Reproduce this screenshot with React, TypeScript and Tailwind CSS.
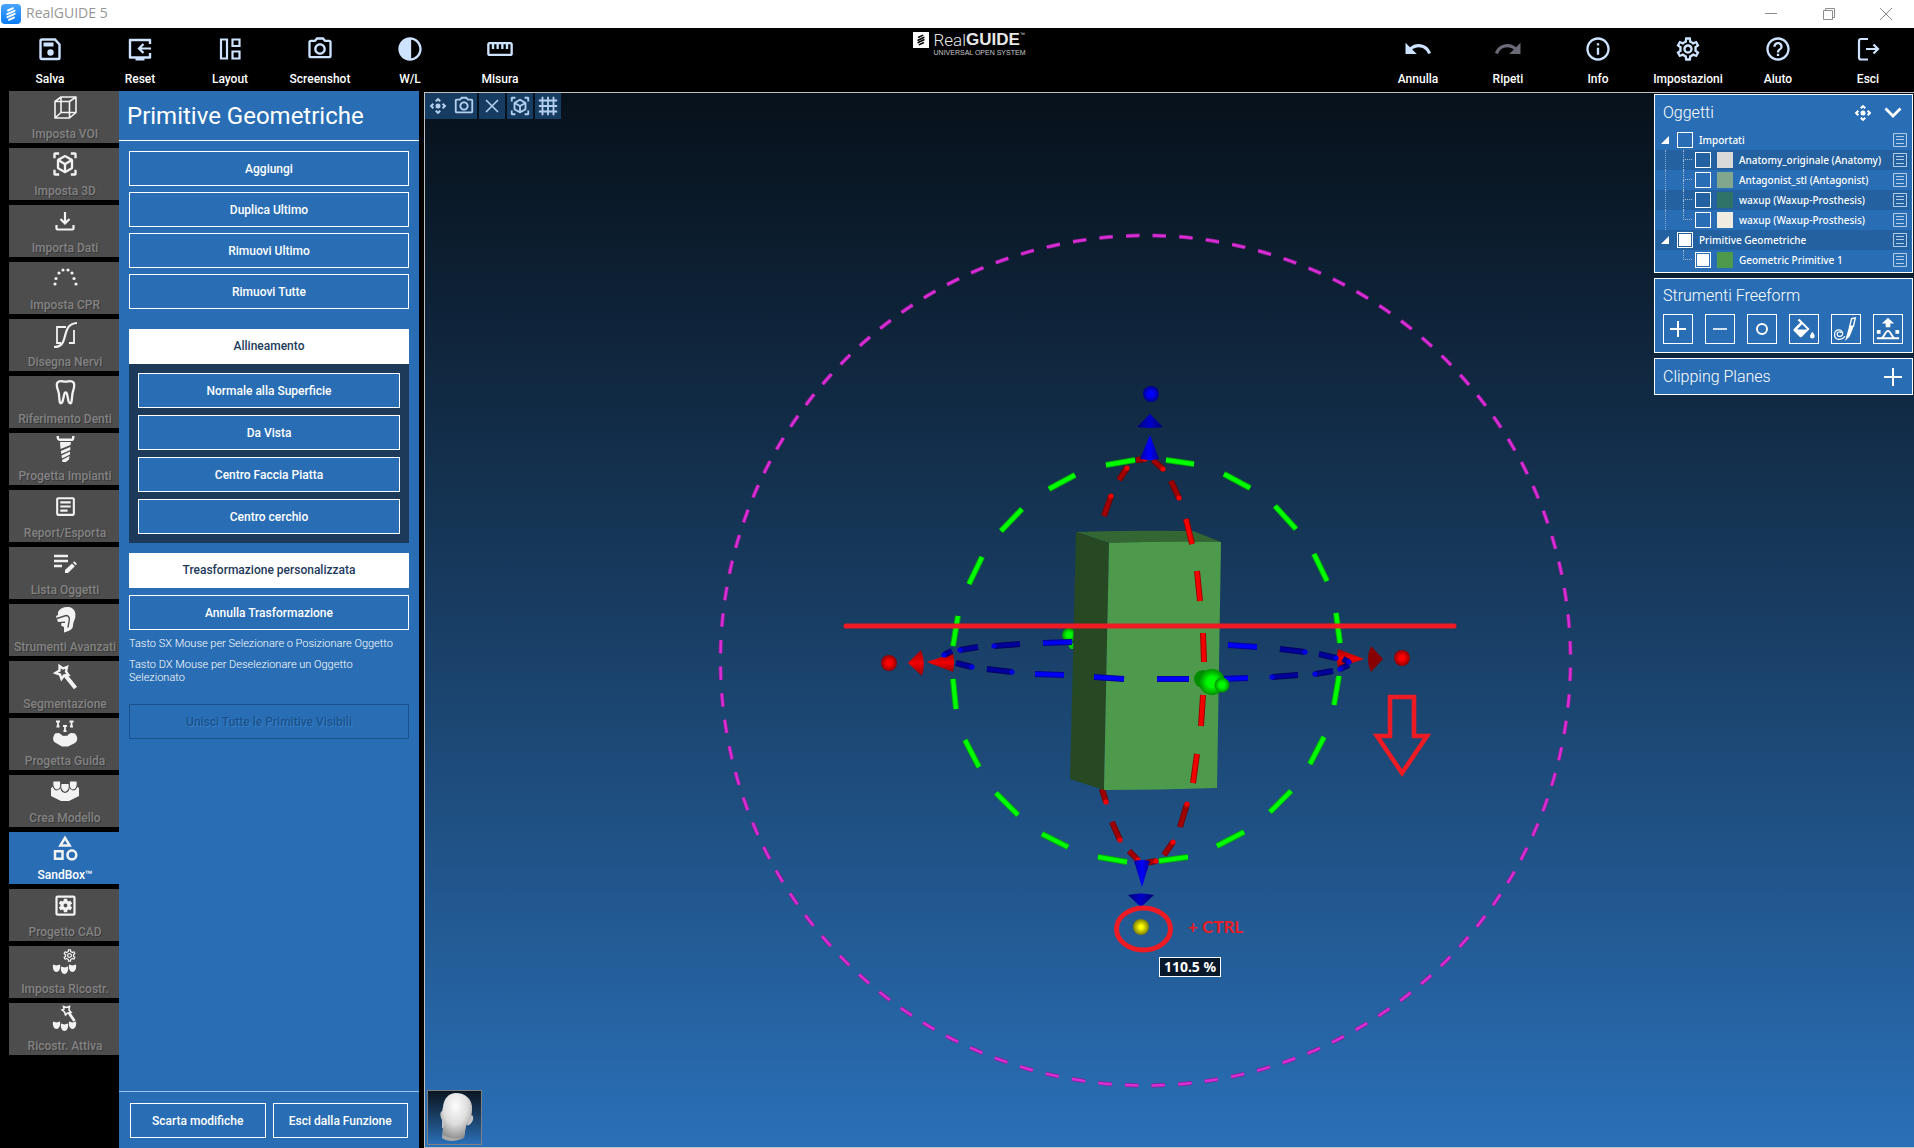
import type { ReactNode } from "react";
import {
  MdControlCamera,
  MdGrid4X4,
  MdHelpOutline,
  MdOutlineArticle,
  MdOutlineCategory,
  MdOutlineContrast,
  MdOutlineInfo,
  MdOutlinePhotoCamera,
  MdOutlineSettings,
  MdOutlineSettingsApplications,
  MdOutlineStraighten,
  MdRedo,
  MdUndo,
  MdViewInAr,
} from "react-icons/md";

export default function App() {
  return (
    <div className="flex h-screen flex-col overflow-hidden bg-black font-['Roboto',sans-serif] text-white">
      <TitleBar />
      <Toolbar />
      <main className="flex min-h-0 flex-1">
        <Sidebar />
        <PrimitivesPanel />
        <Viewport />
      </main>
    </div>
  );
}

function TitleBar() {
  return (
    <header className="flex h-7 shrink-0 items-center bg-white pl-px">
      <AppLogo />
      <h1 className="ml-[5px] flex-1 pb-0.5 font-['Open_Sans',sans-serif] text-[14px] leading-5 text-[#969696]">RealGUIDE 5</h1>
      <div className="flex items-center text-[#8c8c8c]">
        <button aria-label="Riduci" className="flex h-7 w-[58px] items-center justify-center">
          <svg width="14" height="14" viewBox="0 0 14 14" stroke="currentColor"><path d="M1 6.5h12" /></svg>
        </button>
        <button aria-label="Ripristina" className="flex h-7 w-[58px] items-center justify-center">
          <svg width="14" height="14" viewBox="0 0 14 14" fill="none" stroke="currentColor"><path d="M1.5 3.5h9v9h-9zM3.5 3.5v-2h9v9h-2" /></svg>
        </button>
        <button aria-label="Chiudi" className="flex h-7 w-[56px] items-center justify-center">
          <svg width="14" height="14" viewBox="0 0 14 14" stroke="currentColor"><path d="M1 1l12 12M13 1L1 13" /></svg>
        </button>
      </div>
    </header>
  );
}

function AppLogo() {
  return (
    <svg width="20" height="20" viewBox="0 0 20 20">
      <defs>
        <linearGradient id="logo" x1="0" y1="0" x2="0" y2="1">
          <stop offset="0" stopColor="#4aa6ff" />
          <stop offset="1" stopColor="#0a7bf5" />
        </linearGradient>
      </defs>
      <rect width="20" height="20" rx="4" fill="url(#logo)" />
      <HelixMark color="#fff" />
    </svg>
  );
}

function HelixMark({ color }: { color: string }) {
  return (
    <g fill="none" stroke={color} strokeWidth="2" strokeLinecap="round">
      <path d="M7 6.5L12 4.2M6.3 10.2L13.5 6.8M6.5 13.2L13.7 9.8M8 15.8L13 13.5" />
    </g>
  );
}

const LEFT_TOOLS = [
  { label: "Salva", icon: <SaveIcon /> },
  { label: "Reset", icon: <ResetIcon /> },
  { label: "Layout", icon: <LayoutIcon /> },
  { label: "Screenshot", icon: <MdOutlinePhotoCamera size={28} /> },
  { label: "W/L", icon: <MdOutlineContrast size={28} /> },
  { label: "Misura", icon: <MdOutlineStraighten size={28} /> },
];

const RIGHT_TOOLS = [
  { label: "Annulla", icon: <MdUndo size={30} /> },
  { label: "Ripeti", icon: <MdRedo size={30} />, dim: true },
  { label: "Info", icon: <MdOutlineInfo size={28} /> },
  { label: "Impostazioni", icon: <MdOutlineSettings size={28} /> },
  { label: "Aiuto", icon: <MdHelpOutline size={28} /> },
  { label: "Esci", icon: <ExitIcon /> },
];

function Toolbar() {
  return (
    <nav className="flex h-[63px] shrink-0 items-start justify-between bg-black pl-[5px] pr-px">
      <ToolGroup tools={LEFT_TOOLS} />
      <div className="flex gap-[5px] pl-5 pt-1">
        <svg width="16" height="16" viewBox="0 0 20 20">
          <rect width="20" height="20" fill="#fff" />
          <HelixMark color="#000" />
        </svg>
        <div className="font-['Liberation_Sans',sans-serif]">
          <div className="flex text-[17px] leading-4 text-[#e8e8e8]">
            <span className="font-['Roboto'] font-light">Real</span>
            <span className="font-bold">GUIDE</span>
            <span className="text-[5px] leading-[5px]">™</span>
          </div>
          <div className="text-[7px] leading-[9px] text-[#c8c8c8]">UNIVERSAL OPEN SYSTEM</div>
        </div>
      </div>
      <ToolGroup tools={RIGHT_TOOLS} />
    </nav>
  );
}

function ToolGroup({ tools }: { tools: { label: string; icon: ReactNode; dim?: boolean }[] }) {
  return (
    <div className="flex">
      {tools.map((t) => (
        <button key={t.label} className="flex w-[90px] flex-col items-center pt-1.5">
          <span className={`flex h-[30px] items-center ${t.dim ? "text-[#6a6a78]" : "text-[#cde3ff]"}`}>{t.icon}</span>
          <span className="mt-1.5 text-xs font-medium leading-[18px]">{t.label}</span>
        </button>
      ))}
    </div>
  );
}

const STEPS = [
  { label: "Imposta VOI", icon: <WireCubeIcon /> },
  { label: "Imposta 3D", icon: <MdViewInAr size={28} /> },
  { label: "Importa Dati", icon: <ImportIcon /> },
  { label: "Imposta CPR", icon: <ArchDotsIcon /> },
  { label: "Disegna Nervi", icon: <NerveIcon /> },
  { label: "Riferimento Denti", icon: <ToothIcon /> },
  { label: "Progetta Impianti", icon: <ImplantIcon /> },
  { label: "Report/Esporta", icon: <MdOutlineArticle size={25} /> },
  { label: "Lista Oggetti", icon: <ListEditIcon /> },
  { label: "Strumenti Avanzati", icon: <HelmetIcon /> },
  { label: "Segmentazione", icon: <WandIcon /> },
  { label: "Progetta Guida", icon: <GuideIcon /> },
  { label: "Crea Modello", icon: <ModelIcon /> },
  { label: "SandBox™", icon: <MdOutlineCategory size={30} />, active: true },
  { label: "Progetto CAD", icon: <MdOutlineSettingsApplications size={27} /> },
  { label: "Imposta Ricostr.", icon: <RestoreSetupIcon /> },
  { label: "Ricostr. Attiva", icon: <RestoreActiveIcon /> },
];

function Sidebar() {
  return (
    <nav className="flex w-[119px] shrink-0 flex-col gap-[5px] pl-[9px]">
      {STEPS.map((s) => (
        <button
          key={s.label}
          className={`flex h-[52px] shrink-0 flex-col items-center pl-0.5 ${s.active ? "bg-[#296eb4]" : "bg-[#4d4d4d]"}`}
        >
          <span className="flex h-[34px] items-center justify-center pb-0.5 text-[#f2f2f2]">{s.icon}</span>
          <span
            className={`text-xs font-medium leading-[18px] ${s.active ? "text-white" : "text-[#828282] [text-shadow:1px_1px_0_#3a3a3a]"}`}
          >
            {s.label}
          </span>
        </button>
      ))}
    </nav>
  );
}

const OUTLINE_BUTTON = "h-[35px] w-full border border-white text-xs font-medium";

function PrimitivesPanel() {
  return (
    <section className="flex w-[300px] shrink-0 flex-col bg-[#296eb4]">
      <h2 className="h-[50px] border-b border-white pl-2 text-2xl leading-[50px]">Primitive Geometriche</h2>
      <div className="flex-1 px-2.5 pt-2.5">
        <div className="flex flex-col gap-1.5">
          {["Aggiungi", "Duplica Ultimo", "Rimuovi Ultimo", "Rimuovi Tutte"].map((b) => (
            <button key={b} className={OUTLINE_BUTTON}>{b}</button>
          ))}
        </div>

        <div className="mt-5 bg-[#1e3a5a]">
          <h3 className="h-[35px] bg-white text-center text-xs font-medium leading-[35px] text-[#1e3a5a]">Allineamento</h3>
          <div className="flex flex-col gap-[7px] p-[9px]">
            {["Normale alla Superficie", "Da Vista", "Centro Faccia Piatta", "Centro cerchio"].map((b) => (
              <button key={b} className={`${OUTLINE_BUTTON} bg-[#296eb4]`}>{b}</button>
            ))}
          </div>
        </div>

        <h3 className="mt-2.5 h-[35px] bg-white text-center text-xs font-medium leading-[35px] text-[#1e3a5a]">
          Treasformazione personalizzata
        </h3>
        <button className={`mt-[7px] ${OUTLINE_BUTTON}`}>Annulla Trasformazione</button>
        <p className="mt-[7px] text-[11px] font-light leading-[13px]">Tasto SX Mouse per Selezionare o Posizionare Oggetto</p>
        <p className="mt-2 text-[11px] font-light leading-[13px]">
          Tasto DX Mouse per Deselezionare un Oggetto
          <br />
          Selezionato
        </p>
        <button
          disabled
          className="mt-5 h-[35px] w-full border border-[#1b528c] text-xs font-medium text-[#1b528c] [text-shadow:1px_1px_0_#3a80c8]"
        >
          Unisci Tutte le Primitive Visibili
        </button>
      </div>
      <footer className="flex h-[57px] gap-[7px] border-t border-[#9cc4ea] px-[11px] pt-[11px]">
        <button className={OUTLINE_BUTTON}>Scarta modifiche</button>
        <button className={OUTLINE_BUTTON}>Esci dalla Funzione</button>
      </footer>
    </section>
  );
}

function Viewport() {
  return (
    <section className="relative ml-[5px] mt-px min-w-0 flex-1 overflow-hidden border-y border-l border-[#c0c0c0] bg-linear-to-b from-[#07111b] to-[#2a70b8]">
      <Scene />

      {/* View controls */}
      <div className="absolute left-0 top-0 flex gap-0.5 text-[#b4cfee]">
        <div className="flex">
          <ViewButton label="Sposta"><MdControlCamera size={20} /></ViewButton>
          <ViewButton label="Cattura vista"><MdOutlinePhotoCamera size={22} /></ViewButton>
        </div>
        <ViewButton label="Chiudi vista">
          <svg width="14" height="14" viewBox="0 0 14 14" stroke="currentColor" strokeWidth="1.6"><path d="M1 1l12 12M13 1L1 13" /></svg>
        </ViewButton>
        <ViewButton label="Vista 3D"><MdViewInAr size={22} /></ViewButton>
        <ViewButton label="Griglia"><MdGrid4X4 size={22} /></ViewButton>
      </div>

      {/* Docked panels */}
      <div className="absolute right-px top-px flex w-[259px] flex-col gap-[5px]">
        <ObjectsPanel />
        <FreeformPanel />
        <div className="flex h-[37px] items-center justify-between border border-white bg-[#296eb4] pl-2 pr-2.5">
          <h2 className="text-base font-light">Clipping Planes</h2>
          <button aria-label="Espandi Clipping Planes">
            <svg width="18" height="18" viewBox="0 0 18 18" stroke="currentColor" strokeWidth="2"><path d="M9 0v18M0 9h18" /></svg>
          </button>
        </div>
      </div>

      <HeadThumbnail />
    </section>
  );
}

function ViewButton({ label, children }: { label: string; children: ReactNode }) {
  return (
    <button aria-label={label} className="flex size-[26px] items-center justify-center bg-[#173c61]">
      {children}
    </button>
  );
}

const OBJECTS = [
  { name: "Importati", group: true },
  { name: "Anatomy_originale (Anatomy)", color: "#d9d9d9", trunk: true },
  { name: "Antagonist_stl (Antagonist)", color: "#82a78f", trunk: true },
  { name: "waxup (Waxup-Prosthesis)", color: "#2f7368", trunk: true },
  { name: "waxup (Waxup-Prosthesis)", color: "#f1ece1", trunk: true, last: true },
  { name: "Primitive Geometriche", group: true, checked: true },
  { name: "Geometric Primitive 1", color: "#4d9a4c", checked: true, last: true },
];

function ObjectsPanel() {
  return (
    <div className="border border-white bg-[#296eb4] pb-0.5">
      <div className="flex h-[35px] items-center pl-2 pr-2.5">
        <h2 className="flex-1 text-base font-light">Oggetti</h2>
        <button aria-label="Sposta pannello"><MdControlCamera size={20} /></button>
        <button aria-label="Comprimi Oggetti" className="ml-[11px]">
          <svg width="18" height="12" viewBox="0 0 18 12" fill="none" stroke="currentColor" strokeWidth="2.8"><path d="M1.5 1.5L9 9l7.500-7.500" /></svg>
        </button>
      </div>
      <ul className="px-px font-['Noto_Sans',sans-serif] text-[10px] font-medium">
        {OBJECTS.map((o, i) => (
          <li key={i} className={`flex h-5 items-center pr-1 ${i % 2 ? "bg-[#2361a0]" : ""}`}>
            {o.group ? (
              <span className="flex w-[21px] justify-start pl-[5px]">
                <svg width="8" height="8" viewBox="0 0 8 8" fill="#fff"><path d="M8 0v8H0z" /></svg>
              </span>
            ) : (
              <>
                <span className={`ml-[9px] h-5 w-[18px] border-l border-dotted ${o.trunk ? "border-[#86a9cd]" : "border-transparent"}`} />
                <span className="flex h-5 w-3 flex-col">
                  <span className="h-2.5 w-[9px] border-b border-l border-dotted border-[#a3bdd8]" />
                  {!o.last && <span className="h-2.5 border-l border-dotted border-[#a3bdd8]" />}
                </span>
              </>
            )}
            <input
              type="checkbox"
              id={`object-${i}`}
              defaultChecked={o.checked}
              className="size-4 appearance-none border border-white p-px checked:bg-white checked:bg-clip-content"
            />
            {o.color && <span className="ml-1.5 size-4" style={{ backgroundColor: o.color }} />}
            <label htmlFor={`object-${i}`} className="ml-1.5 flex-1 whitespace-nowrap">{o.name}</label>
            <button aria-label={`Menu ${o.name}`} className="text-[#b3cde8]">
              <svg width="14" height="14" viewBox="0 0 14 14" fill="none" stroke="currentColor"><path d="M.5.5h13v13H.5zM3 3.500h8M3 6.500h8M3 10.500h8" /></svg>
            </button>
          </li>
        ))}
      </ul>
    </div>
  );
}

const FREEFORM_TOOLS = [
  { label: "Aggiungi materiale", icon: <svg width="18" height="18" viewBox="0 0 18 18" stroke="currentColor" strokeWidth="2"><path d="M9 1v16M1 9h16" /></svg> },
  { label: "Rimuovi materiale", icon: <svg width="18" height="18" viewBox="0 0 18 18" stroke="currentColor" strokeWidth="1.6"><path d="M2 9h14" /></svg> },
  { label: "Liscia", icon: <svg width="14" height="14" viewBox="0 0 14 14" fill="none" stroke="currentColor" strokeWidth="2"><circle cx="7" cy="7" r="5" /></svg> },
  { label: "Riempi", icon: <FillIcon /> },
  { label: "Disegna", icon: <BrushIcon /> },
  { label: "Deforma", icon: <DeformIcon /> },
];

function FreeformPanel() {
  return (
    <div className="h-[75px] border border-white bg-[#296eb4] px-2 pt-[5px]">
      <h2 className="text-base font-light leading-6">Strumenti Freeform</h2>
      <div className="mt-1.5 flex gap-3">
        {FREEFORM_TOOLS.map((t) => (
          <button key={t.label} aria-label={t.label} className="flex size-[30px] items-center justify-center border border-white">
            {t.icon}
          </button>
        ))}
      </div>
    </div>
  );
}

function HeadThumbnail() {
  return (
    <button
      aria-label="Orientamento testa"
      className="absolute bottom-0.5 left-0.5 border border-[#808080] bg-linear-to-b from-[#0a1622] to-[#2a6fb6]"
    >
      <svg width="53" height="53" viewBox="0 0 53 53">
        <defs>
          <radialGradient id="skull" cx="45%" cy="28%" r="75%">
            <stop offset="0" stopColor="#fdfdfd" />
            <stop offset="0.55" stopColor="#dcdcdc" />
            <stop offset="1" stopColor="#8c8c8c" />
          </radialGradient>
        </defs>
        <path d="M16 20c-5-1-4 5-2 9v8l4 1zM41 25c5-3 5 3 3 6s-4 4-5 3z" fill="#c4c4c4" />
        <path d="M15 36l-1 11c5 4 13 4 22 0l2-14z" fill="#a9a9a9" />
        <path d="M28 2c9 0 17 6 16 17 0 7-3 11-6 16l-2 12c-8 1-15 0-21-3l1-11c-2-5-3-10-1-17C16 7 21 2 28 2z" fill="url(#skull)" />
      </svg>
    </button>
  );
}

/* Rotation handles: [x1, y1, x2, y2] of each dash */

const GREEN_DASHES = [
  [1106, 465, 1135, 460], [1166, 460, 1194, 464], [1224, 474, 1250, 488], [1275, 506, 1296, 529],
  [1314, 554, 1327, 581], [1336, 613, 1340, 643], [1339, 676, 1334, 705], [1324, 737, 1310, 764],
  [1291, 791, 1270, 812], [1244, 832, 1217, 846], [1188, 857, 1159, 861], [1127, 862, 1098, 857],
  [1068, 847, 1042, 834], [1018, 815, 996, 793], [979, 767, 965, 740], [956, 709, 953, 679],
  [953, 646, 958, 616], [969, 584, 982, 557], [1001, 531, 1022, 509], [1049, 489, 1075, 475],
];

const RED_BACK = [
  [1136, 460, 1145, 459], [1104, 516, 1111, 496], [1119, 480, 1127, 468], [1153, 460, 1163, 469],
  [1171, 481, 1179, 498], [1180, 827, 1187, 804], [1164, 855, 1173, 842], [1145, 863, 1156, 861],
  [1129, 851, 1138, 860], [1112, 822, 1120, 840], [1102, 789, 1106, 802],
];

const RED_FRONT = [
  [1186, 519, 1192, 544], [1197, 571, 1200, 601], [1203, 633, 1204, 662],
  [1203, 695, 1201, 726], [1197, 754, 1193, 783],
];

const BLUE_BACK = [
  [1020, 644, 994, 646], [978, 647, 960, 650], [952, 651, 944, 655], [956, 663, 972, 667],
  [987, 669, 1012, 672], [1298, 675, 1272, 677], [1333, 671, 1315, 674], [1349, 665, 1340, 669],
  [1343, 659, 1349, 662], [1319, 654, 1336, 658], [1280, 649, 1305, 652],
];

const BLUE_FRONT = [
  [1043, 643, 1072, 642], [1035, 674, 1064, 675], [1094, 677, 1124, 679],
  [1157, 679, 1189, 679], [1221, 679, 1248, 678], [1228, 645, 1257, 647],
];

function Dashes({ list, edge, core, tip }: { list: number[][]; edge: string; core: string; tip?: string }) {
  return (
    <>
      {list.map(([x1, y1, x2, y2]) => (
        <g key={`${x1}-${y1}`}>
          <line x1={x1} y1={y1} x2={x2} y2={y2} stroke={edge} strokeWidth="6" />
          <line x1={x1} y1={y1} x2={x2} y2={y2} stroke={core} strokeWidth="4" />
          {tip && <circle cx={x2} cy={y2} r="2.6" fill={tip} />}
        </g>
      ))}
    </>
  );
}

function Scene() {
  return (
    <svg className="absolute inset-0 size-full" viewBox="425 93 1489 1054" fill="none">
      <defs>
        <radialGradient id="ballBlue"><stop offset="0.3" stopColor="#0000ff" /><stop offset="1" stopColor="#00008c" /></radialGradient>
        <radialGradient id="ballRed"><stop offset="0.3" stopColor="#ff0000" /><stop offset="1" stopColor="#8c0000" /></radialGradient>
        <radialGradient id="ballGreen"><stop offset="0.4" stopColor="#00f800" /><stop offset="1" stopColor="#008c00" /></radialGradient>
        <radialGradient id="ballYellow"><stop offset="0.2" stopColor="#ffff00" /><stop offset="1" stopColor="#7c7c00" /></radialGradient>
        <linearGradient id="coneBlue"><stop offset="0" stopColor="#0000a0" /><stop offset="0.5" stopColor="#0000fa" /><stop offset="1" stopColor="#000090" /></linearGradient>
        <linearGradient id="coneDark"><stop offset="0" stopColor="#000078" /><stop offset="0.5" stopColor="#0000c8" /><stop offset="1" stopColor="#000070" /></linearGradient>
        <linearGradient id="coneRed" x2="0" y2="1"><stop offset="0" stopColor="#a00000" /><stop offset="0.5" stopColor="#f00000" /><stop offset="1" stopColor="#900000" /></linearGradient>
      </defs>

      {/* Outer ring */}
      <circle cx="1145.5" cy="660.5" r="425" stroke="#8a1f92" strokeWidth="4" pathLength="200" strokeDasharray="1 1" strokeDashoffset="-0.54" />
      <circle cx="1145.5" cy="660.5" r="425" stroke="#d82cd4" strokeWidth="2.5" pathLength="200" strokeDasharray="1 1" strokeDashoffset="-0.54" />

      <Dashes list={GREEN_DASHES} edge="#00b000" core="#00ff00" />
      <Dashes list={RED_BACK} edge="#780000" core="#a00000" tip="#ee0000" />
      <circle cx="1069" cy="635" r="7" fill="url(#ballGreen)" />
      <circle cx="1072" cy="646" r="3" fill="#00d000" />

      {/* Handles */}
      <circle cx="1151" cy="394" r="8" fill="url(#ballBlue)" />
      <path d="M1150 414l13 13q-13 2-26 0z" fill="url(#coneDark)" />
      <path d="M1150 435l9 24q-9 2-19 0z" fill="url(#coneBlue)" />
      <circle cx="889" cy="663" r="8" fill="url(#ballRed)" />
      <path d="M908 663l13-13q5 13 1 26z" fill="url(#coneRed)" />
      <path d="M927 662l26-9q2 10 0 19z" fill="url(#coneRed)" />
      <path d="M1364 659l-26-10q-2 9 0 19z" fill="url(#coneRed)" />
      <path d="M1383 659l-12-13q-6 13 0 26z" fill="#880000" />
      <circle cx="1402" cy="658" r="8" fill="url(#ballRed)" />
      <path d="M1134 861q8-2 16 0l-8 26z" fill="url(#coneBlue)" />
      <path d="M1128 895q13-3 26 0l-13 12z" fill="url(#coneDark)" />

      <Dashes list={BLUE_BACK} edge="#000064" core="#00009a" tip="#0000e0" />
      <Dashes list={BLUE_FRONT.slice(0, 1)} edge="#000090" core="#0000f0" />

      {/* Box */}
      <path d="M1076 532q58-2 117-1l28 11-112 1z" fill="#336633" />
      <path d="M1076 532l33 11-5 247-34-11z" fill="#264924" />
      <path d="M1109 543q56-2 112-1l-4 246q-56 2-113 2z" fill="#4e9a4c" />

      <Dashes list={RED_FRONT} edge="#a00000" core="#f40000" />
      <Dashes list={BLUE_FRONT.slice(1)} edge="#0000a0" core="#0000f8" />
      <circle cx="1203" cy="679" r="9" fill="#008c00" />
      <circle cx="1212" cy="682" r="13" fill="url(#ballGreen)" />
      <circle cx="1222" cy="685" r="7.5" fill="url(#ballGreen)" />

      {/* Annotations */}
      <path d="M846 626h608" stroke="#ed1c24" strokeWidth="5" strokeLinecap="round" />
      <path d="M1390 697h24v39h13l-25 37-25-37h13z" stroke="#ed1c24" strokeWidth="4.5" />
      <circle cx="1141" cy="927" r="8" fill="url(#ballYellow)" />
      <ellipse cx="1143.5" cy="929" rx="27" ry="21" stroke="#ed1c24" strokeWidth="5" />
      <text x="1188" y="933" fill="#ed1c24" fontFamily="Lato, sans-serif" fontSize="17" fontWeight="700">+ CTRL</text>
      <rect x="1159.5" y="957.5" width="61" height="19" fill="#07182a" stroke="#fff" />
      <text x="1190" y="972" textAnchor="middle" fill="#fff" fontFamily="Noto Sans, sans-serif" fontSize="14" fontWeight="700">110.5 %</text>
    </svg>
  );
}

/* Icons */

function Icon({ children, size = 28 }: { children: ReactNode; size?: number }) {
  return (
    <svg width={size} height={size} viewBox="0 0 28 28" fill="none" stroke="currentColor" strokeWidth="2">
      {children}
    </svg>
  );
}

function SaveIcon() {
  return (
    <Icon>
      <path d="M6 4.5h13l4.500 5V23a1 1 0 0 1-1 1H6a1.500 1.500 0 0 1-1.500-1.500V6A1.500 1.500 0 0 1 6 4.500z" strokeWidth="2.4" />
      <path d="M7.500 7.500h10v4h-10z" fill="currentColor" stroke="none" />
      <circle cx="14.5" cy="17.5" r="3.2" fill="currentColor" stroke="none" />
    </Icon>
  );
}

function ResetIcon() {
  return (
    <Icon>
      <path d="M24 9V5H4v17.500h20V18" strokeWidth="2.4" strokeLinejoin="round" />
      <path d="M25 13.500H13M17.500 9L13 13.500l4.500 4.500" strokeWidth="2.2" />
      <path d="M9.500 23h9v2.500h-9z" fill="currentColor" stroke="none" />
    </Icon>
  );
}

function LayoutIcon() {
  return (
    <Icon>
      <path d="M5 4.500h6v19H5zM16.500 4.500h7v6.500h-7zM16.500 16.500h7v7h-7z" strokeWidth="2.2" />
    </Icon>
  );
}

function ExitIcon() {
  return (
    <Icon>
      <path d="M14 4H7a2 2 0 0 0-2 2v16.500a2 2 0 0 0 2 2h7M12 14h12M19.500 9.500L24 14l-4.500 4.500" strokeWidth="2.2" />
    </Icon>
  );
}

function WireCubeIcon() {
  return (
    <Icon>
      <path d="M4 8.500L10 4h15v15.500L18.500 25H4zM4 8.500h14.500V25M18.500 8.500L25 4M10 4v15.500h15M10 19.500L4 25" strokeWidth="1.6" strokeLinejoin="round" />
    </Icon>
  );
}

function ImportIcon() {
  return (
    <Icon>
      <path d="M14 5v11M9.500 12l4.500 4.500 4.500-4.500M5.500 18v3.500a1 1 0 0 0 1 1h15a1 1 0 0 0 1-1V18" strokeWidth="2.2" />
    </Icon>
  );
}

function ArchDotsIcon() {
  const dots = [[4, 20], [5, 14.5], [8, 9], [12, 6], [17, 6], [21, 9], [23, 14.5], [25, 20]];
  return (
    <Icon>
      {dots.map(([x, y]) => (
        <circle key={x} cx={x} cy={y} r="1.6" fill="currentColor" stroke="none" />
      ))}
    </Icon>
  );
}

function NerveIcon() {
  return (
    <Icon>
      <path d="M15 6H6v16h4M18 22h5V9" strokeWidth="1.8" />
      <path d="M3 26c7 0 9-3 11-11s4-12.500 12-13" strokeWidth="2.2" />
    </Icon>
  );
}

function ToothIcon() {
  return (
    <Icon>
      <path
        d="M6.500 4.500c2-2.500 5-.8 8-.8s6-1.700 8 .8c1.800 2.500.4 6-.6 9-1 3.500-.6 7-1.600 11-1 1.500-2.300.5-2.800-1.500l-1.500-7c-.5-2-2.200-2-2.700 0l-1.600 7c-.5 2-2 3-2.800 1.500-1-4-.4-7.500-1.500-11-1-3-2.700-6.500-.9-9z"
        strokeWidth="2.3"
      />
    </Icon>
  );
}

function ImplantIcon() {
  return (
    <Icon>
      <g fill="currentColor" stroke="none">
        <path d="M5.500 1H8v2.500h13V1h2.500c0 3-.5 5-3 5h-12c-2.500-1-3-2-3-5z" />
        <path d="M9 7h11l-.5 3L9.500 14zM9.800 16l9.500-4v3l-9 4zM10.500 20.500l8.500-4v3l-8 4zM11 25l7.500-4-.5 3.500-3 2.500h-3.500z" />
      </g>
    </Icon>
  );
}

function ListEditIcon() {
  return (
    <Icon>
      <path d="M3 7h14M3 12h14M3 17h8" strokeWidth="2.4" />
      <path d="M14 24v-3l7-6.500 2.800 2.800L17 24zM22 13.500l1.300-1.200 2.700 2.700-1.300 1.300z" fill="currentColor" stroke="none" />
    </Icon>
  );
}

function HelmetIcon() {
  return (
    <Icon>
      <path d="M7 6c2-4 6-5.500 11-5 5.500 1 7.500 6 6 11.500-1 3-2 4.500-2 7 0 3-2 5-9 7V21l-3-1.500.5-2.500H14v-1.500l-7 .5-2-6 2-1z" fill="currentColor" stroke="none" />
      <path d="M6 12.500l9-3c3 0 4 3 3 6l-1 6" stroke="#4d4d4d" strokeWidth="1.4" />
    </Icon>
  );
}

function WandIcon() {
  return (
    <Icon>
      <path d="M8.500 3l3.500 2.500L16 4l-1 4.500 2.500 3.500-4.500.5-2.500 3.500-1.500-4.500L4.500 10 8.500 7.500z" strokeWidth="2.4" />
      <path d="M14 12l10.500 13" strokeWidth="4" />
    </Icon>
  );
}

function GuideIcon() {
  return (
    <Icon>
      <path d="M5 1.500h4M7 1.500V7M5.500 6.500h3M18.500 1.500h4M20.500 1.500V7M19 6.500h3M12 6h4M14 6v6M12.500 11h3" strokeWidth="1.8" />
      <path d="M4 13.500c3-1 5-.5 6 1 2 1.500 5.500 1.500 7.500 0 1-1.500 3.500-2 6.500-1 3 4 3 7 0 9.500L17 26.500h-6l-7-4c-2.500-2-2.500-5 0-9z" fill="currentColor" stroke="none" />
      <path d="M11 15h6" stroke="#4d4d4d" strokeWidth="1.2" />
    </Icon>
  );
}

function ModelIcon() {
  return (
    <Icon>
      <path d="M0 11l3-2h22l3 2v8l-10 5h-8L0 19z" fill="currentColor" stroke="none" />
      <g fill="currentColor" stroke="#4d4d4d" strokeWidth="1.1">
        <path d="M2 4h7.500c1 5 0 8.500-3.500 9C2.500 12.500 1 9 2 4zM18.500 4H26c1 5-.5 8.500-4 9-3.500-.5-4.500-4-3.500-9z" />
        <path d="M10 6.500h8c1 5 0 8-4 9-4-1-5-4-4-9z" />
      </g>
    </Icon>
  );
}

function TeethRow() {
  return (
    <g fill="currentColor" stroke="none">
      <path d="M2 16.500l3.500 1 3.500-1c.6 4-.5 7-3.500 7.500-3-.5-4-3.500-3.500-7.500zM18 16.500l3.500 1 3.500-1c.6 4-.5 7-3.500 7.500-3-.5-4-3.500-3.500-7.500z" />
      <path d="M10 18.500l3.500 1 3.500-1c.6 4-.5 7-3.500 7.500-3-.5-4-3.500-3.500-7.500z" />
    </g>
  );
}

function RestoreSetupIcon() {
  return (
    <Icon>
      <MdOutlineSettings x={11} y={0} size={15} />
      <TeethRow />
    </Icon>
  );
}

function RestoreActiveIcon() {
  return (
    <Icon>
      <path d="M12.500 1.500l3 1 3-1-.5 3.500 2 2.500-3.500.5-2 2-1-3-2.500-2 2-1z" strokeWidth="1.6" />
      <path d="M18 8l5.500 8" strokeWidth="2.8" />
      <TeethRow />
    </Icon>
  );
}

function FillIcon() {
  return (
    <Icon size={26}>
      <path d="M9 3l11 11-8.500 8.500a1.500 1.500 0 0 1-2 0L3 16a1.500 1.500 0 0 1 0-2l7-7-3-2.500zM12 9l-5.500 5.500h11z" fill="currentColor" fillRule="evenodd" stroke="none" />
      <path d="M23 17c1.500 2 2.500 3.300 2.500 4.700a2.500 2.500 0 0 1-5 0c0-1.400 1-2.700 2.500-4.700z" fill="currentColor" stroke="none" />
    </Icon>
  );
}

function BrushIcon() {
  return (
    <Icon size={26}>
      <path d="M9 18c-2-2-5-.5-4.500 2 .5 2.500 4 2.500 5.500.5 1.500-3-1-6-4.500-5.500-5 1-5 8.500-.5 10 3 .8 6-.5 8-3" strokeWidth="1.3" />
      <path d="M20 3l4-1-2 9h-4zM18 12l3 .5-3.500 9-3 3z" strokeWidth="1.5" />
      <path d="M18 12l3 .5-3.500 9-3 3z" fill="currentColor" stroke="none" />
    </Icon>
  );
}

function DeformIcon() {
  return (
    <Icon size={26}>
      <path d="M14 2l6.500 6H16.500v4h-5V8H7.500zM2 15h4v4H2zM22 15h4v4h-4z" fill="currentColor" stroke="none" />
      <path d="M2 24h24M7 24c3-1 4-8 7-8s4 7 7 8" />
    </Icon>
  );
}
